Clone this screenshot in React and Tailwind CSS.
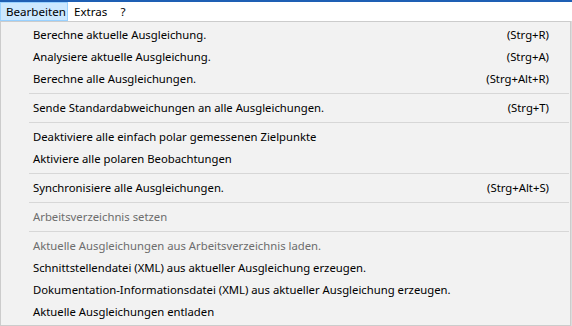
import React from "react";

const F = { fontFamily: '"Noto Sans", "Open Sans", sans-serif' };

const items = [
  { t: "Berechne aktuelle Ausgleichung.", k: "(Strg+R)" },
  { t: "Analysiere aktuelle Ausgleichung.", k: "(Strg+A)" },
  { t: "Berechne alle Ausgleichungen.", k: "(Strg+Alt+R)" },
  "sep",
  { t: "Sende Standardabweichungen an alle Ausgleichungen.", k: "(Strg+T)" },
  "sep",
  { t: "Deaktiviere alle einfach polar gemessenen Zielpunkte" },
  { t: "Aktiviere alle polaren Beobachtungen" },
  "sep",
  { t: "Synchronisiere alle Ausgleichungen.", k: "(Strg+Alt+S)" },
  "sep",
  { t: "Arbeitsverzeichnis setzen", d: true },
  "sep",
  { t: "Aktuelle Ausgleichungen aus Arbeitsverzeichnis laden.", d: true },
  { t: "Schnittstellendatei (XML) aus aktueller Ausgleichung erzeugen." },
  { t: "Dokumentation-Informationsdatei (XML) aus aktueller Ausgleichung erzeugen." },
  { t: "Aktuelle Ausgleichungen entladen" },
];

export default function App() {
  return (
    <div className="relative w-[572px] h-[326px] overflow-hidden bg-white text-[11.3px] text-black" style={F}>
      <div className="h-[2px] bg-[#1e5fb4]" />
      <div className="flex h-[19px] items-stretch text-[11.6px]">
        <div className="flex items-center px-[5px] bg-[#cce8ff] border border-[#99d1ff] w-[68px]">Bearbeiten</div>
        <div className="flex items-center pl-[6px] pr-[6px]">Extras</div>
        <div className="flex items-center pl-[7px]">?</div>
      </div>
      <div className="absolute left-[569px] top-[21px] bottom-0 w-[3px] bg-[#dcdcdc]" />
      <div className="absolute left-0 top-[21px] w-[571px] h-[305px] bg-[#f2f2f2] border border-[#cccccc] py-[2px]">
        {items.map((it, i) =>
          it === "sep" ? (
            <div key={i} className="h-[7px] flex items-center pl-[28px] pr-[1px]">
              <div className="h-px w-full bg-[#d7d7d7]" />
            </div>
          ) : (
            <div
              key={i}
              className={`h-[22px] flex items-center pl-[32px] pr-[21px] whitespace-nowrap ${it.d ? "text-[#6d6d6d]" : "text-black"}`}
            >
              <span className="flex-1">{it.t}</span>
              {it.k && <span>{it.k}</span>}
            </div>
          )
        )}
      </div>
    </div>
  );
}
